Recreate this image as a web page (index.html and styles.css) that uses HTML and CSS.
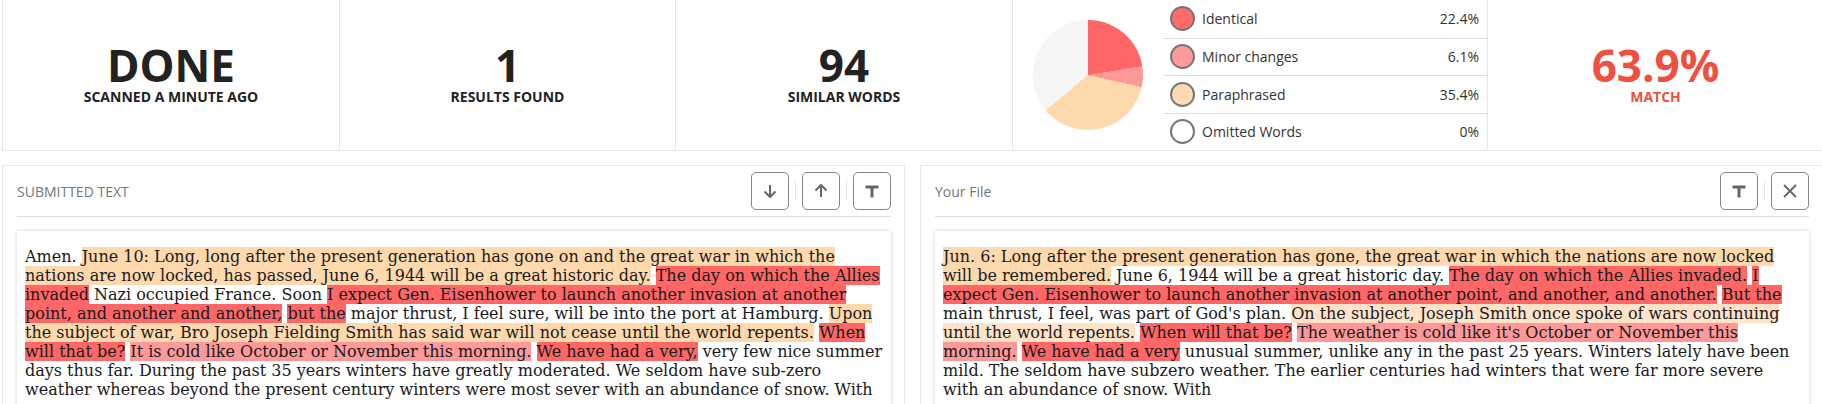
FILE: index.html
```html
<!DOCTYPE html>
<html lang="en">
<head>
<meta charset="utf-8">
<title>Comparison</title>
<link rel="stylesheet" href="styles.css">
</head>
<body>
<div class="page">
  <section class="stats">
    <div class="stat">
      <div class="stat-value">DONE</div>
      <div class="stat-label">SCANNED A MINUTE AGO</div>
    </div>
    <div class="stat">
      <div class="stat-value">1</div>
      <div class="stat-label">RESULTS FOUND</div>
    </div>
    <div class="stat">
      <div class="stat-value">94</div>
      <div class="stat-label">SIMILAR WORDS</div>
    </div>
    <div class="stat chart">
      <div class="pie"></div>
      <ul class="legend">
        <li class="legend-row"><span class="dot dot-identical"></span><span class="legend-name">Identical</span><span class="legend-pct">22.4%</span></li>
        <li class="legend-row"><span class="dot dot-minor"></span><span class="legend-name">Minor changes</span><span class="legend-pct">6.1%</span></li>
        <li class="legend-row"><span class="dot dot-para"></span><span class="legend-name">Paraphrased</span><span class="legend-pct">35.4%</span></li>
        <li class="legend-row"><span class="dot dot-omit"></span><span class="legend-name">Omitted Words</span><span class="legend-pct">0%</span></li>
      </ul>
    </div>
    <div class="stat match">
      <div class="stat-value">63.9%</div>
      <div class="stat-label">MATCH</div>
    </div>
  </section>

  <section class="panels">
    <div class="panel">
      <div class="panel-head">
        <span class="panel-title upper">Submitted Text</span>
        <div class="tools">
          <button class="tool" type="button" aria-label="Next">
            <svg width="16" height="14" viewBox="0 0 16 14"><path d="M8 1V13M2.5 7.5L8 13L13.5 7.5" fill="none" stroke="#666" stroke-width="2"/></svg>
          </button>
          <span class="sep"></span>
          <button class="tool" type="button" aria-label="Previous">
            <svg width="16" height="14" viewBox="0 0 16 14"><path d="M8 13V1M2.5 6.5L8 1L13.5 6.5" fill="none" stroke="#666" stroke-width="2"/></svg>
          </button>
          <span class="sep"></span>
          <button class="tool" type="button" aria-label="Text mode">
            <svg width="14" height="13" viewBox="0 0 14 13"><path d="M0.5 0.5H13.5V3.5H8.5V12.5H5.5V3.5H0.5Z" fill="#666"/></svg>
          </button>
        </div>
      </div>
      <div class="doc">
        Amen. <mark class="para">June 10: Long, long after the present generation has gone on and the great war in which the nations are now locked, has passed, June 6, 1944 will be a great historic day.</mark> <mark class="ident">The day on which the Allies invaded</mark> Nazi occupied France. Soon <mark class="ident">I expect Gen. Eisenhower to launch another invasion at another point, and another and another,</mark> <mark class="ident">but the</mark> major thrust, I feel sure, will be into the port at Hamburg. <mark class="para">Upon the subject of war, Bro Joseph Fielding Smith has said war will not cease until the world repents.</mark> <mark class="ident">When will that be?</mark> <mark class="minor">It is cold like October or November this morning.</mark> <mark class="ident">We have had a very,</mark> very few nice summer days thus far. During the past 35 years winters have greatly moderated. We seldom have sub-zero weather whereas beyond the present century winters were most sever with an abundance of snow. With
      </div>
    </div>

    <div class="panel">
      <div class="panel-head">
        <span class="panel-title">Your File</span>
        <div class="tools">
          <button class="tool" type="button" aria-label="Text mode">
            <svg width="14" height="13" viewBox="0 0 14 13"><path d="M0.5 0.5H13.5V3.5H8.5V12.5H5.5V3.5H0.5Z" fill="#666"/></svg>
          </button>
          <span class="sep"></span>
          <button class="tool" type="button" aria-label="Close">
            <svg width="14" height="14" viewBox="0 0 14 14"><path d="M1 1L13 13M13 1L1 13" fill="none" stroke="#666" stroke-width="1.8"/></svg>
          </button>
        </div>
      </div>
      <div class="doc">
        <mark class="para">Jun. 6: Long after the present generation has gone, the great war in which the nations are now locked will be remembered.</mark> June 6, 1944 will be a great historic day. <mark class="ident">The day on which the Allies invaded.</mark> <mark class="ident">I expect Gen. Eisenhower to launch another invasion at another point, and another, and another.</mark> <mark class="ident">But the</mark> main thrust, I feel, was part of God's plan. <mark class="para-light">On the subject, Joseph Smith once spoke of wars continuing until the world repents.</mark> <mark class="ident">When will that be?</mark> <mark class="minor">The weather is cold like it's October or November this morning.</mark> <mark class="ident">We have had a very</mark> unusual summer, unlike any in the past 25 years. Winters lately have been mild. The seldom have subzero weather. The earlier centuries had winters that were far more severe with an abundance of snow. With
      </div>
    </div>
  </section>
</div>
</body>
</html>
```

FILE: styles.css
```css
html, body {
  margin: 0;
  padding: 0;
  background: #fff;
  overflow: hidden;
}

body {
  font-family: "Open Sans", "Liberation Sans", sans-serif;
  color: #222;
}

.page {
  width: 1821px;
  padding-left: 2px;
}

/* ---------- stats bar ---------- */
.stats {
  display: grid;
  grid-template-columns: 337px 336px 337px 475px 1fr;
  height: 151px;
  box-sizing: border-box;
  border-left: 1px solid #e6e6e6;
  border-bottom: 1px solid #e6e6e6;
}

.stat {
  display: flex;
  flex-direction: column;
  align-items: center;
  justify-content: center;
  border-right: 1px solid #e6e6e6;
  padding-bottom: 2px;
}

.stat:last-child {
  border-right: none;
}

.stat-value {
  font-size: 44px;
  font-weight: 700;
  line-height: 44px;
  color: #222;
}

.stat-label {
  font-size: 14px;
  font-weight: 700;
  line-height: 17px;
  margin-top: 1px;
  color: #222;
}

.match .stat-value,
.match .stat-label {
  color: #ef5040;
}

.chart {
  flex-direction: row;
  justify-content: flex-start;
  align-items: stretch;
  padding: 0 0 0 20px;
}

.pie {
  width: 110px;
  height: 110px;
  border-radius: 50%;
  align-self: center;
  background: conic-gradient(#ff6666 0 22.4%, #ff9999 0 28.5%, #fed9ae 0 63.9%, #f5f5f5 0);
  flex: none;
}

.legend {
  list-style: none;
  margin: 0 0 0 20px;
  padding: 0;
  flex: 1;
  display: grid;
  grid-template-rows: repeat(4, 1fr);
}

.legend-row {
  display: flex;
  align-items: center;
  padding: 0 8px 0 7px;
  font-size: 14px;
  color: #333;
}

.legend-row + .legend-row {
  border-top: 1px solid #e0e0e0;
}

.dot {
  width: 21px;
  height: 21px;
  border-radius: 50%;
  border: 2px solid #767676;
  flex: none;
  margin-right: 7px;
}

.dot-identical { background: #ff6b6b; }
.dot-minor { background: #ff9a9a; }
.dot-para { background: #fedab0; }
.dot-omit { background: #fff; }

.legend-name {
  flex: 1;
}

.legend-pct {
  text-align: right;
}

/* ---------- panels ---------- */
.panels {
  display: grid;
  grid-template-columns: 903px 903px;
  column-gap: 15px;
  margin-top: 14px;
}

.panel {
  border: 1px solid #e6e6e6;
  padding: 0 13px 0 14px;
  height: 300px;
}

.panel-head {
  display: flex;
  align-items: center;
  justify-content: space-between;
  padding: 6px 0;
  border-bottom: 1px solid #e0e0e0;
}

.panel-title {
  font-size: 14px;
  color: #777;
}

.panel-title.upper {
  text-transform: uppercase;
}

.tools {
  display: flex;
  align-items: center;
}

.tool {
  width: 38px;
  height: 38px;
  box-sizing: border-box;
  border: 1px solid #858585;
  border-radius: 5px;
  background: #fff;
  padding: 0;
  display: flex;
  align-items: center;
  justify-content: center;
}

.sep {
  width: 1px;
  height: 20px;
  background: #e2e2e2;
  margin: 0 6px;
}

.doc {
  margin-top: 14px;
  padding: 16px 8px;
  background: #fff;
  box-shadow: 0 0 4px rgba(0, 0, 0, 0.18);
  font-family: "DejaVu Serif", serif;
  font-size: 16px;
  line-height: 19px;
  color: #1a1a1a;
  height: 300px;
}

mark {
  color: inherit;
}

mark.para { background: #fed9ae; }
mark.para-light { background: #fee3c9; }
mark.ident { background: #ff6666; }
mark.minor { background: #ff9999; }
```
